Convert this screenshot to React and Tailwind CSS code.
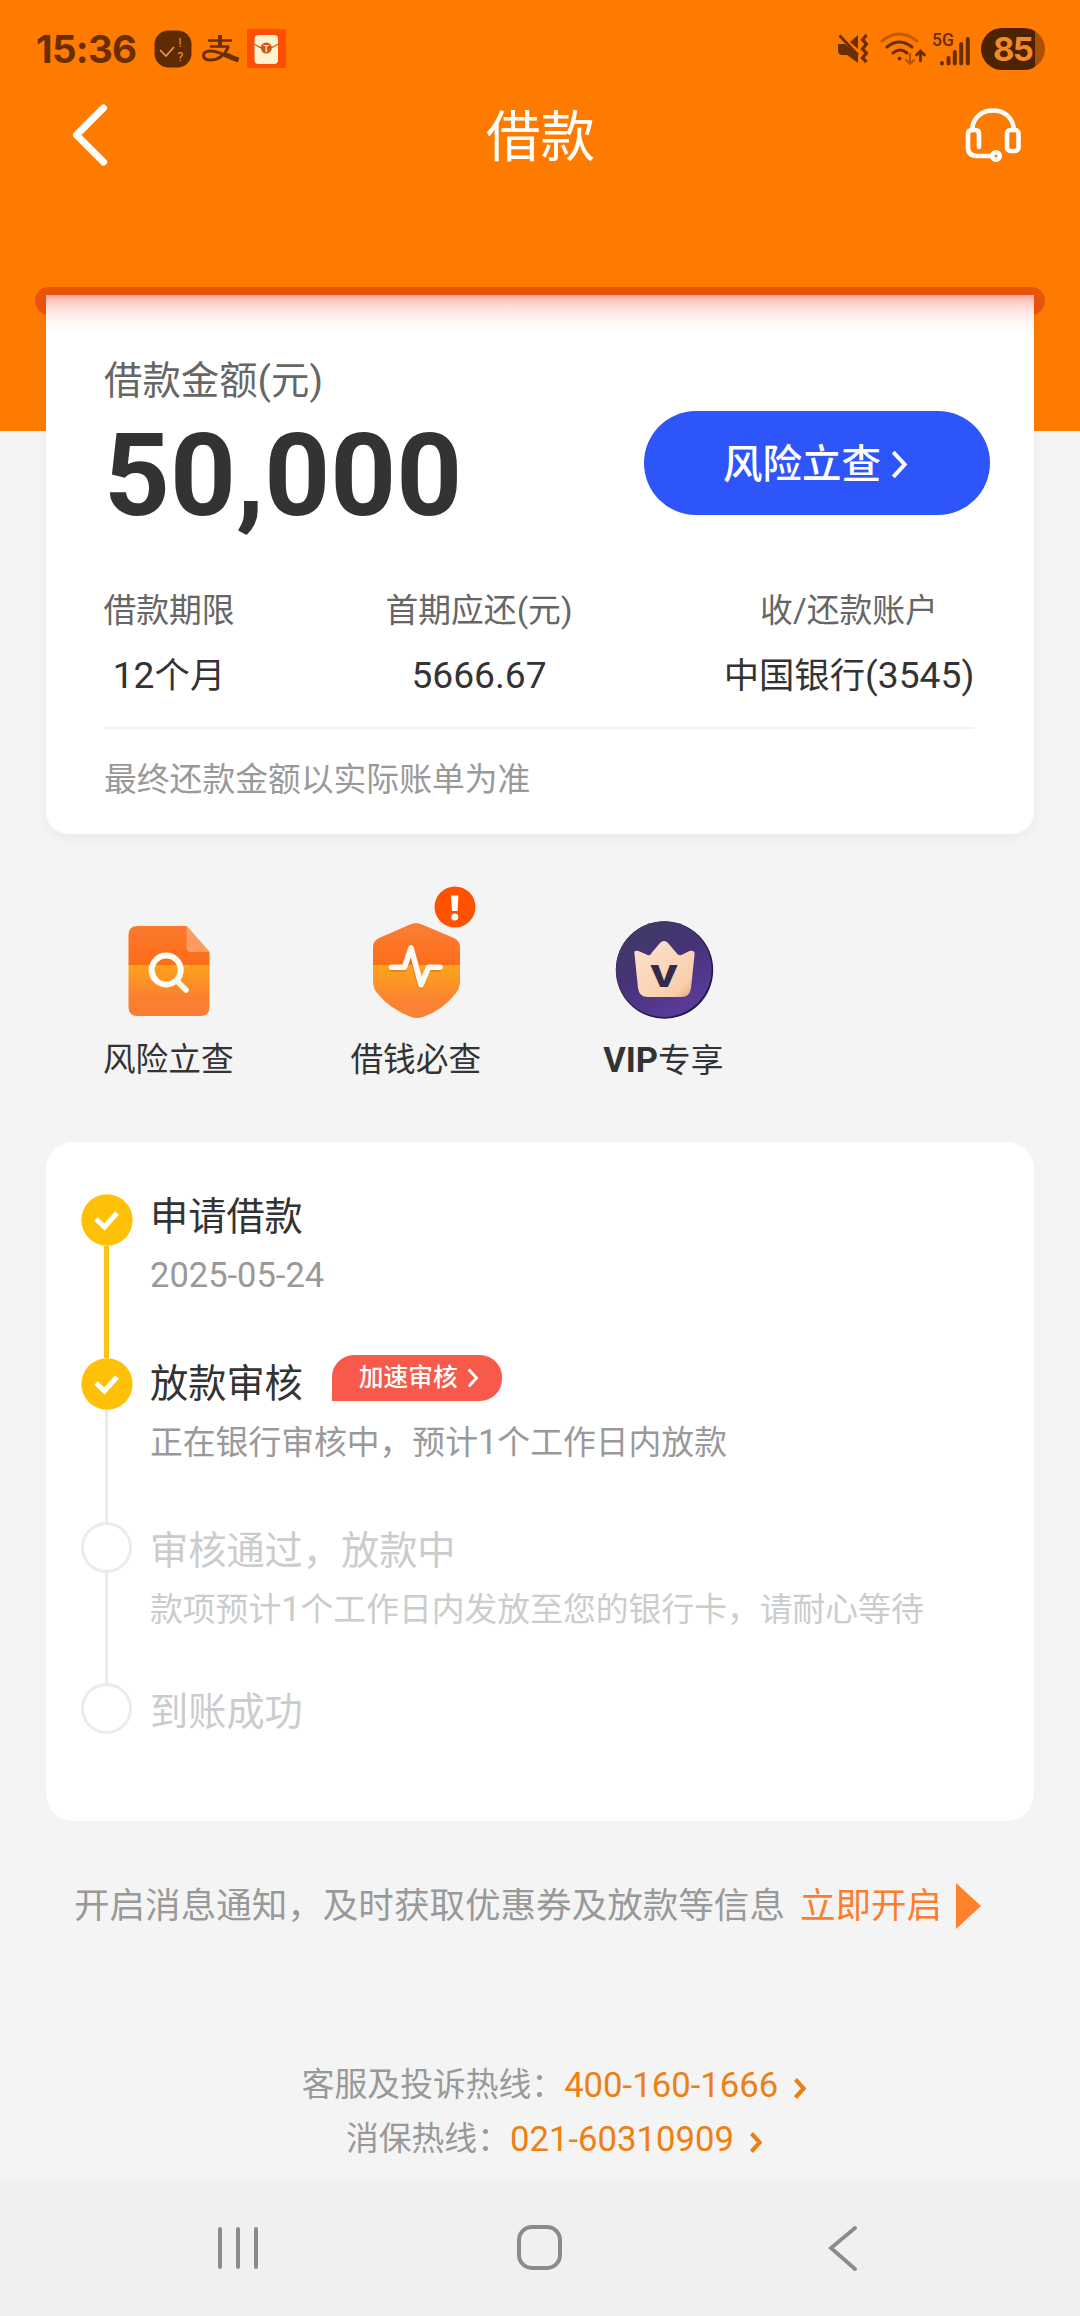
import React from 'react';

const shortcuts = [
    { label: '风险立查', icon: DocumentIcon },
    { label: '借钱必查', icon: ShieldIcon, alert: true },
    { prefix: 'VIP', label: '专享', icon: VipIcon }
];

const terms = [
    { label: '借款期限', value: <>12<Cn>个月</Cn></>, width: 'w-[130px]' },
    { label: <>首期应还<En>(</En>元<En>)</En></>, value: '5666.67', width: 'w-[188px]' },
    { label: <>收<En>/</En>还款账户</>, value: <><Cn>中国银行</Cn>(3545)</>, width: 'w-[250px]' }
];

const steps = [
    {
        title: '申请借款',
        detail: '2025-05-24',
        done: true,
        line: 'w-[5px] bg-[#fdc10f]',
        height: 'h-[164px]',
        offset: 'mt-[-3px]'
    },
    {
        title: '放款审核',
        detail: <><Cn>正在银行审核中，预计</Cn>1<Cn>个工作日内放款</Cn></>,
        done: true,
        tag: '加速审核',
        line: 'w-[3px] bg-[#ebebeb]',
        height: 'h-[164px]',
        offset: 'mt-0'
    },
    {
        title: '审核通过，放款中',
        detail: <><Cn>款项预计</Cn>1<Cn>个工作日内发放至您的银行卡，请耐心等待</Cn></>,
        line: 'w-[3px] bg-[#ebebeb]',
        height: 'h-[161px]',
        offset: 'mt-[3px]'
    },
    { title: '到账成功', height: 'h-[52px]', offset: 'mt-[3px]' }
];

const hotlines = [
    { label: '客服及投诉热线：', phone: '400-160-1666' },
    { label: '消保热线：', phone: '021-60310909' }
];

// Chinese glyphs run a little smaller than the latin ones next to them
function Cn({ children }) {
    return <span className="text-[0.951em]">{children}</span>;
}

function En({ children }) {
    return <span className="text-[1.02em]">{children}</span>;
}

function Chevron({ className, width = 3 }) {
    return (
        <svg viewBox="0 0 16 28" fill="none" stroke="currentColor" strokeWidth={width} className={className}>
            <path d="M2 2l11 12L2 26" />
        </svg>
    );
}

function DocumentIcon() {
    return (
        <svg width="100" height="104" viewBox="0 0 100 104">
            <defs>
                <linearGradient id="docTop" x1="0" y1="0" x2="0" y2="1">
                    <stop offset="0" stopColor="#fb7a30" />
                    <stop offset="1" stopColor="#fd6d18" />
                </linearGradient>
                <linearGradient id="docBottom" x1="0" y1="0" x2="0" y2="1">
                    <stop offset="0" stopColor="#fda31c" />
                    <stop offset="0.6" stopColor="#fb8230" />
                    <stop offset="1" stopColor="#fb7a34" />
                </linearGradient>
            </defs>
            <path d="M9.500 47V17q0-9 9-9h49l23 26v13z" fill="url(#docTop)" />
            <path d="M9.500 47h81v42q0 9-9 9h-63q-9 0-9-9z" fill="url(#docBottom)" />
            <path d="M67.500 8l23 26h-18q-5 0-5-5z" fill="#fd9a64" />
            <circle cx="47.2" cy="52" r="14.5" fill="none" stroke="#fffdf5" strokeWidth="6" />
            <path d="M59 64l8 8" stroke="#effbef" strokeWidth="5.6" strokeLinecap="round" />
        </svg>
    );
}

function ShieldIcon() {
    return (
        <svg width="100" height="104" viewBox="0 0 100 104">
            <defs>
                <linearGradient id="shieldTop" x1="0" y1="0" x2="0" y2="1">
                    <stop offset="0" stopColor="#fb7f38" />
                    <stop offset="1" stopColor="#fd6d18" />
                </linearGradient>
                <linearGradient id="shieldBottom" x1="0" y1="0" x2="0" y2="1">
                    <stop offset="0" stopColor="#fda41c" />
                    <stop offset="0.7" stopColor="#fb8232" />
                </linearGradient>
            </defs>
            <path d="M7 47V29q0-6 6-9l31-13.500q6-3 12 0L88 20q6 3 6 9v18z" fill="url(#shieldTop)" />
            <path d="M7 47h87v16q0 7-4 12-13 17-33 24-6 2-12 0Q24 91 11 75q-4-5-4-12z" fill="url(#shieldBottom)" />
            <path
                d="M25.500 51h13l6-19 10 36 7-17h12"
                fill="none"
                stroke="#b8561c"
                strokeOpacity="0.4"
                strokeWidth="5.6"
                strokeLinecap="round"
                strokeLinejoin="round"
            />
            <path
                d="M25.500 49.300h13l6.500-19.500 10 37 7.500-17.500h11.500"
                fill="none"
                stroke="#fffaf3"
                strokeWidth="5.6"
                strokeLinecap="round"
                strokeLinejoin="round"
            />
        </svg>
    );
}

function VipIcon() {
    return (
        <svg width="100" height="104" viewBox="0 0 100 104">
            <defs>
                <linearGradient id="vipBg" x1="0.2" y1="0" x2="0.8" y2="1">
                    <stop offset="0" stopColor="#403b63" />
                    <stop offset="0.45" stopColor="#463377" />
                    <stop offset="1" stopColor="#5f3ca0" />
                </linearGradient>
                <linearGradient id="crown" x1="0" y1="0" x2="1" y2="1">
                    <stop offset="0" stopColor="#fce2cf" />
                    <stop offset="0.8" stopColor="#f9cfac" />
                    <stop offset="1" stopColor="#dfa27e" />
                </linearGradient>
            </defs>
            <circle cx="50.5" cy="52" r="48.7" fill="#241a45" />
            <circle cx="49.8" cy="51.2" r="47.8" fill="url(#vipBg)" />
            <path
                d="M20.500 36q-1-4 4-3l9 4q3 1 4-2l8.500-10q4-4 8 0l8.500 10q2 3 5 2l8-4q6-1 5 4l-3.500 33q-1 9-10 9H34q-9 0-10-9z"
                fill="url(#crown)"
            />
            <text x="50" y="69" textAnchor="middle" fontSize="32" fontWeight="900" textLength="27" lengthAdjust="spacingAndGlyphs" fill="#33294d" fontFamily="Roboto">V</text>
        </svg>
    );
}

const StatusBar = () => (
    <div className="flex h-[98px] items-center pl-[36px] pr-[35px] text-[#6b2e00]">
        <span className="w-[104px] font-[Inter] text-[38.5px] leading-[40px] font-bold tracking-[-0.7px]">15:36</span>
        <svg className="ml-[14px] h-[38px] w-[38px]" viewBox="0 0 38 38">
            <rect x="0.5" y="0.5" width="37" height="37" rx="14" fill="#5e2c00" />
            <path d="M6 20l6 6 8-9" fill="none" stroke="#ef9a55" strokeWidth="1.6" />
            <text x="24.5" y="17" fontSize="12" fill="#ef9a55" fontFamily="Roboto">!</text>
            <text x="23.5" y="31" fontSize="12" fill="#ef9a55" fontFamily="Roboto">?</text>
        </svg>
        {/* Alipay */}
        <svg className="ml-[9px] h-[32px] w-[40px]" viewBox="0 0 40 32" fill="none" stroke="currentColor">
            <path d="M7 7.500h24M9 13.500h19" strokeWidth="2.300" />
            <path d="M19 2v12" strokeWidth="4" />
            <path d="M27.500 13.500c-3 7-9 13.500-18 13.500-5 0-7-2-7-4.500 0-3 3-4.500 7-4.500 8 0 16 5.500 28 9" strokeWidth="3" />
            <path d="M24 21.500q6 3 13.500 5.500" strokeWidth="5" />
        </svg>
        <svg className="ml-[5px] h-[42px] w-[42px]" viewBox="0 0 42 42">
            <rect x="1" y="1" width="39" height="39" rx="2" fill="#ff4d05" />
            <rect x="8.500" y="7" width="23.500" height="29" rx="4" fill="#fff3cf" />
            <path d="M8.500 16q11 9 23.500 0" fill="none" stroke="#cf5b1f" strokeWidth="1.300" />
            <circle cx="20.300" cy="20" r="5.500" fill="#d2551a" />
            <text x="20.300" y="23.500" textAnchor="middle" fontSize="9" fontWeight="700" fill="#ffe9c0" fontFamily="Roboto">T</text>
        </svg>
        <div className="ml-auto flex items-center">
            <svg className="h-[30px] w-[31px]" viewBox="0 0 31 30">
                <path d="M1 10h7l13 11v8L10 21H5q-4 0-4-5z" fill="currentColor" />
                <path d="M13 8l8-7v14z" fill="currentColor" />
                <path d="M2.500 1.500L21 21" stroke="currentColor" strokeWidth="2.800" />
                <path d="M29.500 1l-4 5 4 4-4 5 4 4-4 5 4 4" fill="none" stroke="currentColor" strokeWidth="3.200" />
            </svg>
            <svg className="ml-[12px] h-[36px] w-[46px]" viewBox="0 0 46 36" fill="none" stroke="currentColor" strokeWidth="3" strokeLinecap="round">
                <path d="M2 10q17-14 35 0" opacity="0.4" />
                <path d="M7 16q12-10 25 0M13 22q7-6 14 0" />
                <circle cx="19.500" cy="27.500" r="2" fill="currentColor" stroke="none" />
                <path d="M30 23v10m-4-4l4 4 4-4" strokeWidth="2.200" opacity="0.5" />
                <path d="M40.500 30V20m-4 4l4-4 4 4" strokeWidth="2.800" />
            </svg>
            <div className="relative ml-[6px] h-[34px] w-[40px]">
                <span className="absolute top-[-1px] left-0 font-[Roboto] text-[17.500px] leading-[18px] font-medium">5G</span>
                <svg className="absolute inset-0 h-[34px] w-[40px]" viewBox="0 0 40 34" stroke="currentColor" strokeWidth="4" strokeLinecap="round">
                    <path d="M10 31v.500M16.500 26v5.500M22.800 20v11.500M29.200 12v19.500M35.800 7v24.500" />
                </svg>
            </div>
            <div className="ml-[9px] flex h-[42px] w-[64px] items-center overflow-hidden rounded-full bg-[linear-gradient(90deg,#4d2200_84%,#a85200_84%)] pl-[12px]">
                <span className="font-[Inter] text-[33px] leading-[42px] font-bold tracking-[-1.8px] text-[#f28a26]">85</span>
            </div>
        </div>
    </div>
);

const TitleBar = () => (
    <div className="flex h-[76px] items-center justify-between pr-[59px] pl-[69px]">
        <svg className="mt-[-2px] h-[64px] w-[56px]" viewBox="0 0 56 64" fill="none" stroke="#fff" strokeWidth="7" strokeLinecap="round" strokeLinejoin="round">
            <path d="M34.500 5L7.500 32l27 27" />
        </svg>
        <h1 className="mt-[2px] ml-[-9px] text-[54.500px] leading-[76px] whitespace-nowrap text-white">借款</h1>
        <svg className="mt-[-3px] h-[56px] w-[56px]" viewBox="0 0 56 56" fill="none" stroke="#fff" strokeWidth="4.600" strokeLinecap="round">
            <path d="M7 23C8 10 17 3.500 28 3.500S48 10 49 23" />
            <path d="M14 40V27q0-4-4-4H7q-4 0-4 4v13q0 9 9 9h14" />
            <rect x="42" y="23" width="11.500" height="21" rx="3.500" />
            <circle cx="31" cy="49" r="3.800" />
        </svg>
    </div>
);

const LoanCard = () => (
    <section className="mx-[46px] h-[539px] rounded-b-[22px] bg-white bg-[linear-gradient(180deg,#f9aba0_0px,#fdd3cc_9px,#ffe9e5_17px,#fff7f5_28px,#fff_38px)] pt-[60px] pr-[60px] pl-[58px] shadow-[0_4px_12px_rgba(0,0,0,0.04)]">
        <div className="flex justify-between">
            <div>
                <div className="text-[38.4px] leading-[52px] text-[#666]">借款金额<En>(</En>元<En>)</En></div>
                <div className="mt-[9px] text-[115px] leading-[120px] font-bold text-[#333]">50,000</div>
            </div>
            <button className="mt-[56px] mr-[-16px] flex h-[104px] w-[346px] items-center justify-center rounded-full bg-[#2e55fa] pr-[3px] text-[39.500px] font-medium text-white">
                <span className="pt-[3px]">风险立查</span>
                <Chevron className="mt-[2px] ml-[10px] h-[29px] w-[17px]" width={3.8} />
            </button>
        </div>
        <div className="mt-[50px] flex justify-between">
            {terms.map((term, index) => (
                <div key={index} className={`flex flex-col items-center whitespace-nowrap ${term.width}`}>
                    <div className="text-[32.8px] leading-[50px] text-[#666]">{term.label}</div>
                    <div className="mt-[13px] text-[37.2px] leading-[52px] text-[#333]">{term.value}</div>
                </div>
            ))}
        </div>
        <div className="mt-[25px] border-t-2 border-[#f0f0f0] pt-[27px] text-[32.8px] leading-[48px] text-[#999]">
            最终还款金额以实际账单为准
        </div>
    </section>
);

const Shortcuts = () => (
    <section className="mx-[45px] mt-[84px] grid grid-cols-4">
        {shortcuts.map((item) => {
            const Icon = item.icon;
            return (
                <div key={item.label} className="relative flex flex-col items-center">
                    <Icon />
                    {item.alert && (
                        <svg className="absolute top-[-32px] left-[141px] h-[42px] w-[42px]" viewBox="0 0 42 42">
                            <circle cx="21" cy="21" r="20.500" fill="#ff5200" />
                            <path d="M17 9.500h7.500l-1 15.500h-5.500z" fill="#fff" />
                            <circle cx="20.700" cy="31" r="3.500" fill="#fff" />
                        </svg>
                    )}
                    <div className="mt-[13px] mr-[1px] text-[32.700px] leading-[50px] text-[#333]">
                        {item.prefix && <span className="text-[34.500px] font-bold">{item.prefix}</span>}
                        {item.label}
                    </div>
                </div>
            );
        })}
    </section>
);

const StepMark = ({ done }) =>
    done ? (
        <svg className="h-[52px] w-[52px]" viewBox="0 0 52 52" fill="none">
            <circle cx="26" cy="26" r="25.700" fill="#ffc107" />
            <path d="M15 25l8.500 8L36 19" stroke="#fff" strokeWidth="5" />
        </svg>
    ) : (
        <div className="h-[51px] w-[51px] rounded-full border-[3px] border-[#ebebeb]" />
    );

const Timeline = () => (
    <section className="mx-[46px] mt-[56px] h-[679px] rounded-[27px] bg-white pt-[52px] pl-[34.500px]">
        {steps.map((step) => (
            <div key={step.title} className={`flex ${step.height}`}>
                <div className="flex w-[52px] flex-col items-center">
                    <StepMark done={step.done} />
                    {step.line && <div className={`flex-1 ${step.line}`} />}
                </div>
                <div className={`ml-[17.500px] whitespace-nowrap ${step.offset}`}>
                    <div className={`flex h-[52px] items-center text-[38.200px] leading-[52px] ${step.done ? 'text-[#333]' : 'text-[#ccc]'}`}>
                        {step.title}
                        {step.tag && (
                            <span className="mt-[-12px] ml-[29px] flex h-[46px] w-[170px] items-center justify-center rounded-[22px] rounded-bl-none bg-[#f75a4b] pl-[4px] text-[24.700px] font-medium text-white">
                                {step.tag}
                                <Chevron className="ml-[9px] h-[20px] w-[12px]" width={4} />
                            </span>
                        )}
                    </div>
                    {step.detail && (
                        <div className={`mt-[8px] text-[34.500px] leading-[48px] ${step.done ? 'text-[#999]' : 'text-[#ccc]'}`}>
                            {step.detail}
                        </div>
                    )}
                </div>
            </div>
        ))}
    </section>
);

const Footer = () => (
    <footer className="flex flex-1 flex-col">
        <div className="mt-[59px] flex items-center pl-[74px] text-[35.550px] leading-[52px] whitespace-nowrap text-[#999]">
            开启消息通知，及时获取优惠券及放款等信息
            <span className="ml-[15px] text-[#ff7d2a]">立即开启</span>
            <svg className="ml-[14px] h-[46px] w-[25px]" viewBox="0 0 25 46">
                <path d="M0 0l25 23L0 46z" fill="#ff812b" />
            </svg>
        </div>
        <div className="mt-[126px] flex flex-col items-center pl-[28px] text-[32.800px] leading-[54px] text-[#999]">
            {hotlines.map((line) => (
                <div key={line.phone} className="flex items-center">
                    {line.label}
                    <span className="text-[34.700px] text-[#ee8013]">{line.phone}</span>
                    <Chevron className="mt-[6px] ml-[16px] h-[21px] w-[12px] text-[#ee8013]" width={5.5} />
                </div>
            ))}
        </div>
    </footer>
);

const NavBar = () => (
    <nav className="grid h-[135px] grid-cols-3 items-center justify-items-center bg-[#f0f0f3] px-[86px] pb-[2px]">
        <svg className="ml-[2px] h-[46px] w-[44px]" viewBox="0 0 44 46" stroke="#8b8b8d" strokeWidth="4" strokeLinecap="round">
            <path d="M4 4v38M22 4v38M40 4v38" />
        </svg>
        <div className="h-[45px] w-[45px] rounded-[15px] border-4 border-[#8b8b8d]" />
        <svg className="h-[46px] w-[32px]" viewBox="0 0 32 46" fill="none" stroke="#8b8b8d" strokeWidth="3.800" strokeLinecap="round">
            <path d="M28 3L4 23l24 21" />
        </svg>
    </nav>
);

export default function App() {
    return (
        <div className="flex h-[2316px] w-[1080px] flex-col overflow-hidden bg-[#f4f4f4] font-[Roboto,'Noto_Sans_CJK_SC',sans-serif]">
            <header className="h-[431px] shrink-0 bg-[#ff7b00]">
                <StatusBar />
                <TitleBar />
                {/* slot the card slides out of */}
                <div className="mx-[35px] mt-[113px] h-[28px] rounded-full bg-[#e9540c]" />
            </header>
            <div className="mt-[-136px] shrink-0">
                <LoanCard />
            </div>
            <Shortcuts />
            <Timeline />
            <Footer />
            <NavBar />
        </div>
    );
}
